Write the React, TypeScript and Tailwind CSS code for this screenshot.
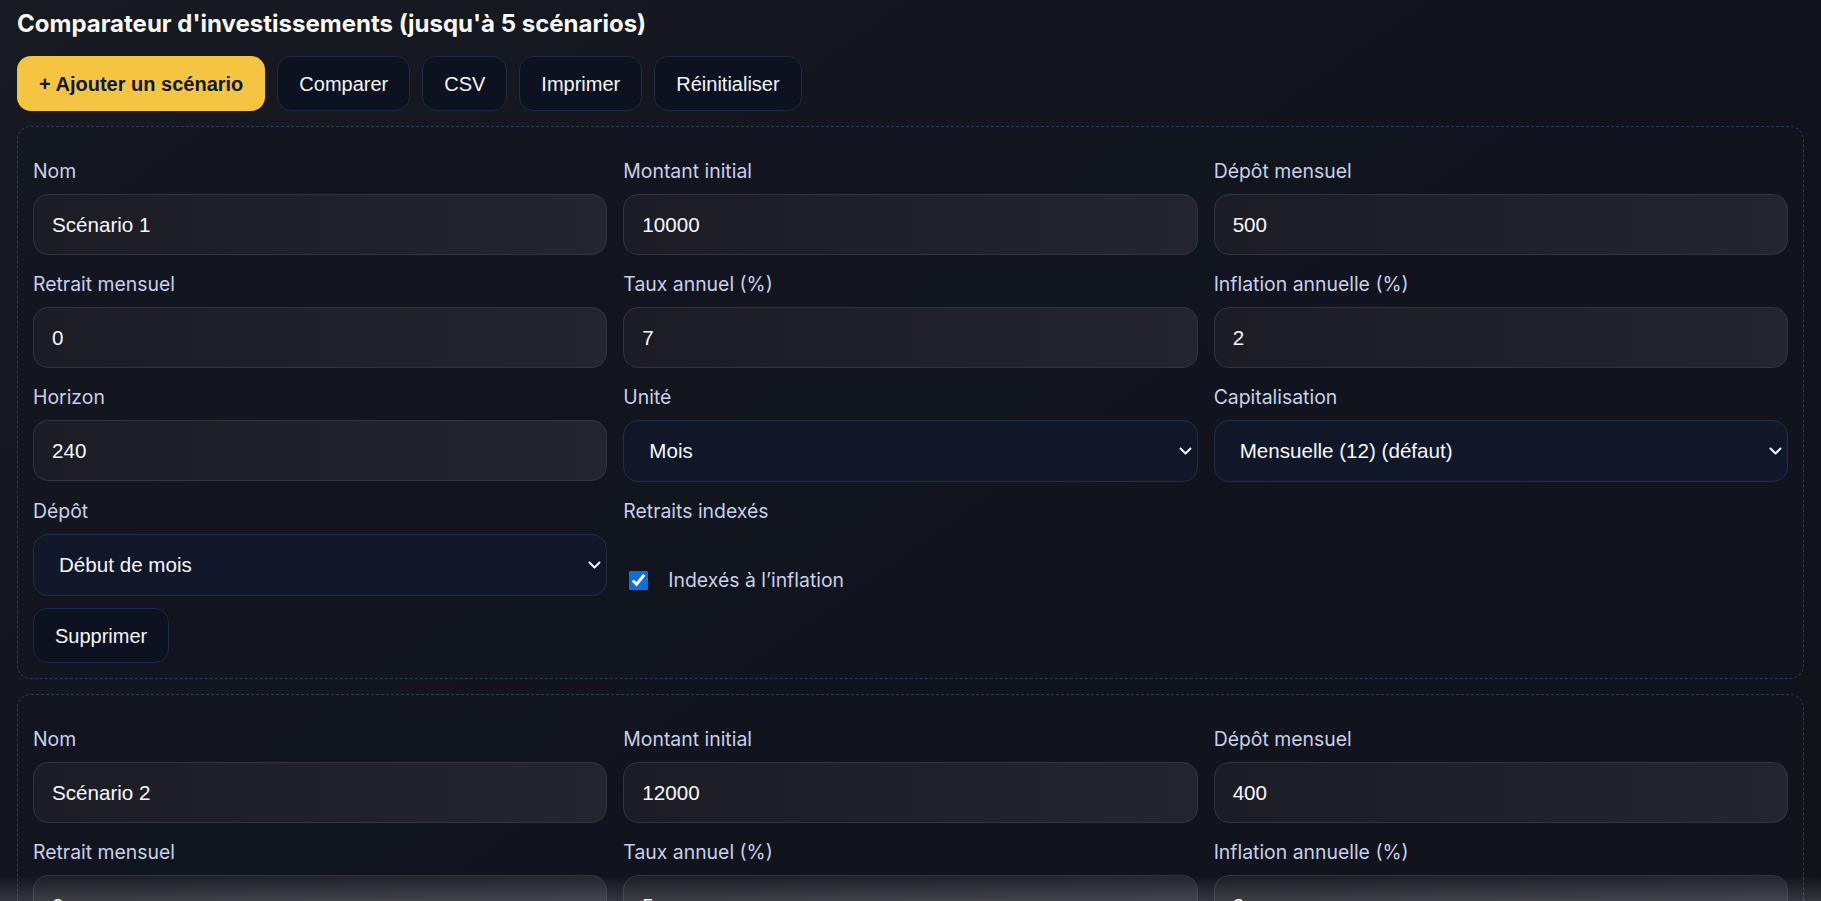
import React from "react";

type Scenario = {
  nom: string;
  montant: string;
  depot: string;
  retrait: string;
  taux: string;
  inflation: string;
  horizon: string;
  indexes: boolean;
};

const scenarios: Scenario[] = [
  {
    nom: "Scénario 1",
    montant: "10000",
    depot: "500",
    retrait: "0",
    taux: "7",
    inflation: "2",
    horizon: "240",
    indexes: true,
  },
  {
    nom: "Scénario 2",
    montant: "12000",
    depot: "400",
    retrait: "0",
    taux: "5",
    inflation: "2",
    horizon: "240",
    indexes: true,
  },
];

const labelCls = "block leading-[23px] text-[19.4px] text-[#c8d0ea] font-['Inter',sans-serif]";
const inputCls =
  "h-[61px] w-full rounded-[15px] border border-[#33353e] bg-gradient-to-r from-[#1c1d24] to-[#24252d] px-[18px] text-[20.6px] text-[#f7f8fc] font-['Liberation_Sans',Arial,sans-serif] outline-none";
const btnCls =
  "h-[55px] rounded-[14px] border border-[#1f2a44] bg-[#0d1221] px-[21px] text-[20px] text-[#f4f6fb] font-['Liberation_Sans',Arial,sans-serif]";

const Field = ({ label, value }: { label: string; value: string }) => (
  <div className="flex flex-col gap-[11px]">
    <label className={labelCls}>{label}</label>
    <input className={inputCls} defaultValue={value} />
  </div>
);

const SelectField = ({ label, value, options }: { label: string; value: string; options: string[] }) => (
  <div className="flex flex-col gap-[11px]">
    <label className={labelCls}>{label}</label>
    <div className="relative">
      <select
        defaultValue={value}
        className="h-[62px] w-full appearance-none rounded-[15px] border border-[#232e46] bg-[#0f1729] pl-[25px] pr-[30px] text-[20.6px] text-[#f7f8fc] font-['Liberation_Sans',Arial,sans-serif] outline-none"
      >
        {options.map((o) => (
          <option key={o}>{o}</option>
        ))}
      </select>
      <svg
        className="pointer-events-none absolute right-[6px] top-1/2 -translate-y-1/2"
        width="13"
        height="9"
        viewBox="0 0 13 9"
        fill="none"
      >
        <path d="M1.5 2l5 5 5-5" stroke="#f4f6fb" strokeWidth="2" strokeLinecap="round" strokeLinejoin="round" />
      </svg>
    </div>
  </div>
);

const ScenarioCard = ({ s }: { s: Scenario }) => (
  <div className="rounded-[14px] border border-dashed border-[#2a3a62] bg-[#131620]/60 px-[15px] pt-[33px] pb-[15px]">
    <div className="grid grid-cols-3 gap-x-[16px] gap-y-[18px]">
      <Field label="Nom" value={s.nom} />
      <Field label="Montant initial" value={s.montant} />
      <Field label="Dépôt mensuel" value={s.depot} />
      <Field label="Retrait mensuel" value={s.retrait} />
      <Field label="Taux annuel (%)" value={s.taux} />
      <Field label="Inflation annuelle (%)" value={s.inflation} />
      <Field label="Horizon" value={s.horizon} />
      <SelectField label="Unité" value="Mois" options={["Mois", "Années"]} />
      <SelectField
        label="Capitalisation"
        value="Mensuelle (12) (défaut)"
        options={["Annuelle (1)", "Trimestrielle (4)", "Mensuelle (12) (défaut)", "Quotidienne (365)"]}
      />
      <SelectField label="Dépôt" value="Début de mois" options={["Début de mois", "Fin de mois"]} />
      <div className="flex flex-col gap-[11px]">
        <span className={labelCls}>Retraits indexés</span>
        <label className="flex h-[62px] items-center gap-[20px] pl-[6px] pt-[31px] text-[19.4px] text-[#c8d0ea] font-['Inter',sans-serif]">
          <input
            type="checkbox"
            defaultChecked={s.indexes}
            className="m-0 h-[19px] w-[19px] accent-[#0b6fd8]"
          />
          Indexés à l’inflation
        </label>
      </div>
    </div>
    <button className={`${btnCls} mt-[12px] h-[54px]`}>Supprimer</button>
  </div>
);

export default function App() {
  return (
    <div className="relative min-h-screen bg-gradient-to-br from-[#171a21] via-[#10131c] to-[#121318] px-[17px] pt-[9px] pb-[40px] font-['Inter',sans-serif]">
      <h1 className="text-[24px] leading-[29px] font-bold text-[#f8fafc]">
        Comparateur d'investissements (jusqu'à 5 scénarios)
      </h1>
      <div className="mt-[18px] flex gap-[12px]">
        <button className="h-[55px] rounded-[14px] bg-[#f5c542] px-[22px] text-[20px] font-bold text-[#0f172a] font-['Liberation_Sans',Arial,sans-serif]">
          + Ajouter un scénario
        </button>
        <button className={btnCls}>Comparer</button>
        <button className={btnCls}>CSV</button>
        <button className={btnCls}>Imprimer</button>
        <button className={btnCls}>Réinitialiser</button>
      </div>
      <div className="mt-[15px] flex flex-col gap-[15px]">
        {scenarios.map((s) => (
          <ScenarioCard key={s.nom} s={s} />
        ))}
      </div>
      {/* soft fade along the bottom of the viewport */}
      <div className="pointer-events-none fixed inset-x-0 bottom-0 h-[26px] bg-gradient-to-b from-transparent to-white/15" />
    </div>
  );
}
